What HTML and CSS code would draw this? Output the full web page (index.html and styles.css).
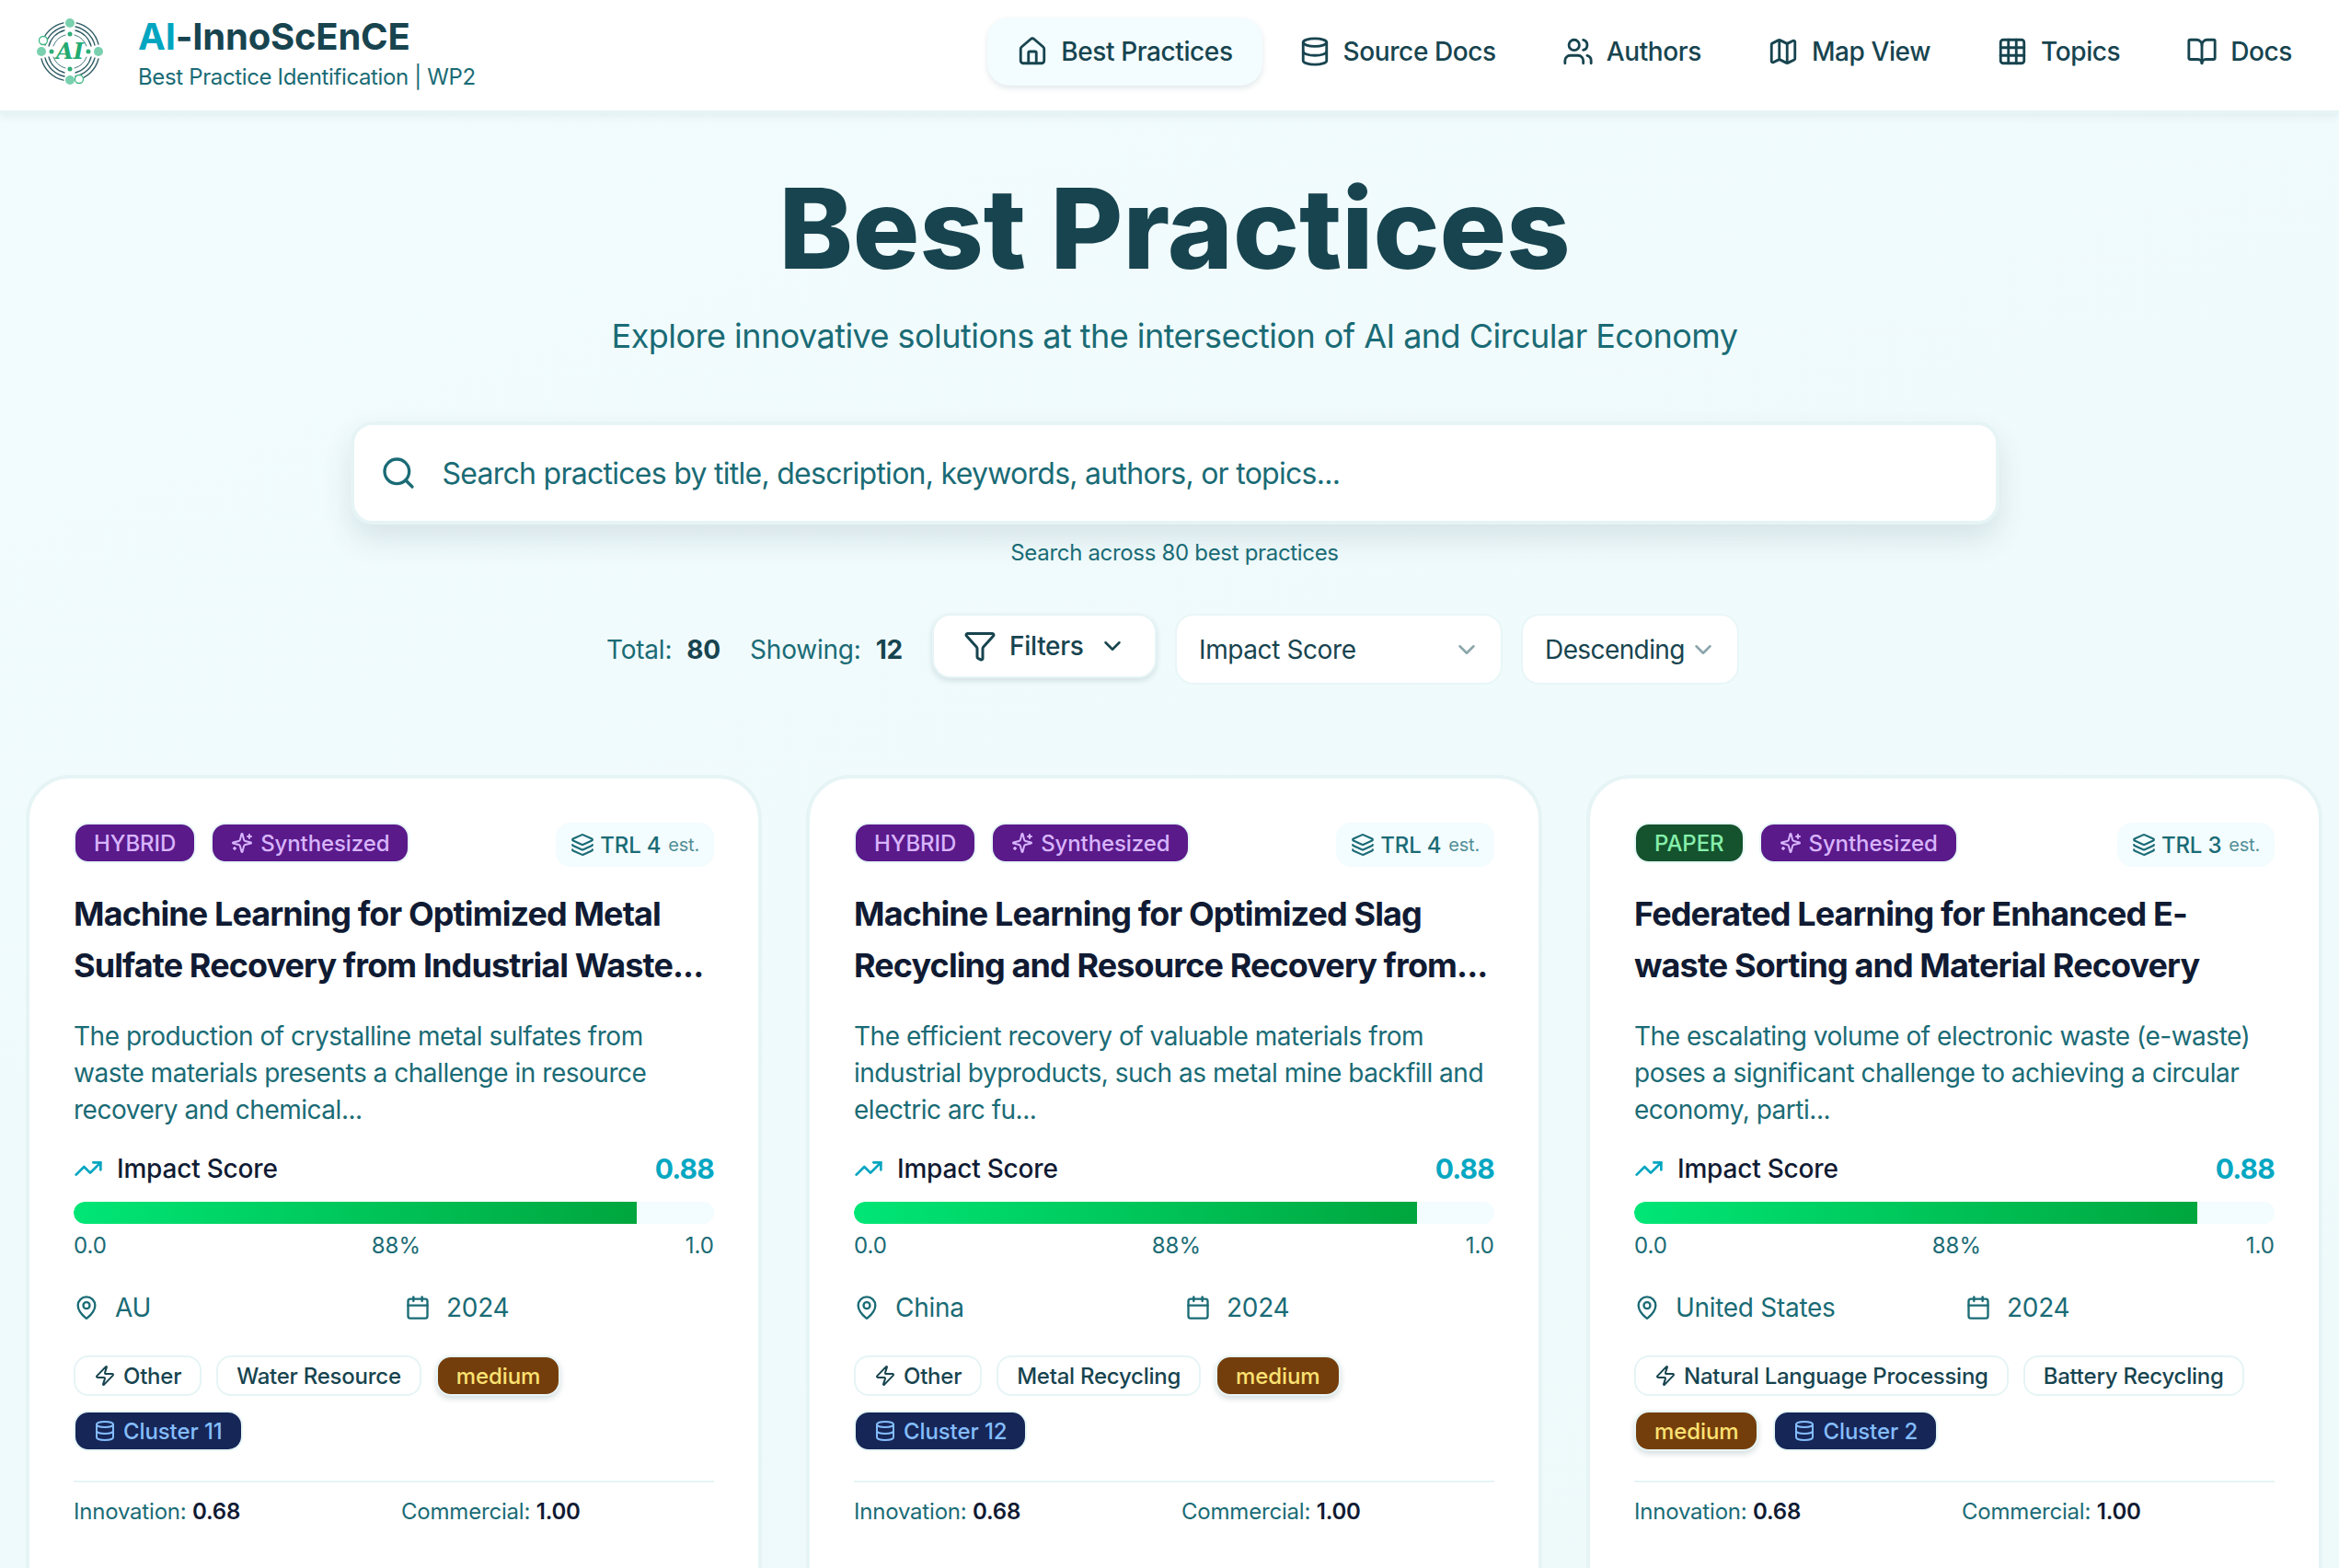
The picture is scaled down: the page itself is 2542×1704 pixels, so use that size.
FILE: index.html
```html
<!DOCTYPE html>
<html lang="en">
<head>
<meta charset="utf-8">
<title>AI-InnoScEnCE Best Practices</title>
<link rel="stylesheet" href="styles.css">
</head>
<body>
<svg class="defs" width="0" height="0" aria-hidden="true">
  <defs>
    <symbol id="i-home" viewBox="0 0 24 24"><path d="M15 21v-8a1 1 0 0 0-1-1h-4a1 1 0 0 0-1 1v8"/><path d="M3 10a2 2 0 0 1 .709-1.528l7-5.999a2 2 0 0 1 2.582 0l7 5.999A2 2 0 0 1 21 10v9a2 2 0 0 1-2 2H5a2 2 0 0 1-2-2z"/></symbol>
    <symbol id="i-db" viewBox="0 0 24 24"><ellipse cx="12" cy="5" rx="9" ry="3"/><path d="M3 5v14a9 3 0 0 0 18 0V5"/><path d="M3 12a9 3 0 0 0 18 0"/></symbol>
    <symbol id="i-users" viewBox="0 0 24 24"><path d="M16 21v-2a4 4 0 0 0-4-4H6a4 4 0 0 0-4 4v2"/><circle cx="9" cy="7" r="4"/><path d="M22 21v-2a4 4 0 0 0-3-3.87"/><path d="M16 3.13a4 4 0 0 1 0 7.75"/></symbol>
    <symbol id="i-map" viewBox="0 0 24 24"><path d="M14.106 5.553a2 2 0 0 0 1.788 0l3.659-1.83A1 1 0 0 1 21 4.619v12.764a1 1 0 0 1-.553.894l-4.553 2.277a2 2 0 0 1-1.788 0l-4.212-2.106a2 2 0 0 0-1.788 0l-3.659 1.83A1 1 0 0 1 3 19.381V6.618a1 1 0 0 1 .553-.894l4.553-2.277a2 2 0 0 1 1.788 0z"/><path d="M15 5.764v15"/><path d="M9 3.236v15"/></symbol>
    <symbol id="i-grid" viewBox="0 0 24 24"><rect x="3" y="3" width="18" height="18" rx="2"/><path d="M3 9h18"/><path d="M3 15h18"/><path d="M9 3v18"/><path d="M15 3v18"/></symbol>
    <symbol id="i-book" viewBox="0 0 24 24"><path d="M12 7v14"/><path d="M3 18a1 1 0 0 1-1-1V4a1 1 0 0 1 1-1h5a4 4 0 0 1 4 4 4 4 0 0 1 4-4h5a1 1 0 0 1 1 1v13a1 1 0 0 1-1 1h-6a3 3 0 0 0-3 3 3 3 0 0 0-3-3z"/></symbol>
    <symbol id="i-search" viewBox="0 0 24 24"><path d="m21 21-4.34-4.34"/><circle cx="11" cy="11" r="8"/></symbol>
    <symbol id="i-filter" viewBox="0 0 24 24"><path d="M10 20a1 1 0 0 0 .553.895l2 1A1 1 0 0 0 14 21v-7a2 2 0 0 1 .517-1.341L21.74 4.67A1 1 0 0 0 21 3H3a1 1 0 0 0-.742 1.67l7.225 7.989A2 2 0 0 1 10 14z"/></symbol>
    <symbol id="i-chev" viewBox="0 0 24 24"><path d="m6 9 6 6 6-6"/></symbol>
    <symbol id="i-spark" viewBox="0 0 24 24"><path d="M9.937 15.5A2 2 0 0 0 8.5 14.063l-6.135-1.582a.5.5 0 0 1 0-.962L8.5 9.936A2 2 0 0 0 9.937 8.5l1.582-6.135a.5.5 0 0 1 .963 0L14.063 8.5A2 2 0 0 0 15.5 9.937l6.135 1.581a.5.5 0 0 1 0 .964L15.5 14.063a2 2 0 0 0-1.437 1.437l-1.582 6.135a.5.5 0 0 1-.963 0z"/><path d="M20 3v4"/><path d="M22 5h-4"/><path d="M4 17v2"/><path d="M5 18H3"/></symbol>
    <symbol id="i-layers" viewBox="0 0 24 24"><path d="M12.83 2.18a2 2 0 0 0-1.66 0L2.6 6.08a1 1 0 0 0 0 1.83l8.58 3.91a2 2 0 0 0 1.66 0l8.58-3.9a1 1 0 0 0 0-1.83z"/><path d="M2 12a1 1 0 0 0 .58.91l8.6 3.91a2 2 0 0 0 1.65 0l8.58-3.9A1 1 0 0 0 22 12"/><path d="M2 17a1 1 0 0 0 .58.91l8.6 3.91a2 2 0 0 0 1.65 0l8.58-3.9A1 1 0 0 0 22 17"/></symbol>
    <symbol id="i-trend" viewBox="0 0 24 24"><path d="M16 7h6v6"/><path d="m22 7-8.5 8.5-5-5L2 17"/></symbol>
    <symbol id="i-pin" viewBox="0 0 24 24"><path d="M20 10c0 4.993-5.539 10.193-7.399 11.799a1 1 0 0 1-1.202 0C9.539 20.193 4 14.993 4 10a8 8 0 0 1 16 0"/><circle cx="12" cy="10" r="3"/></symbol>
    <symbol id="i-cal" viewBox="0 0 24 24"><path d="M8 2v4"/><path d="M16 2v4"/><rect x="3" y="4" width="18" height="18" rx="2"/><path d="M3 10h18"/></symbol>
    <symbol id="i-bolt" viewBox="0 0 24 24"><path d="M4 14a1 1 0 0 1-.78-1.63l9.9-10.2a.5.5 0 0 1 .86.46l-1.92 6.02A1 1 0 0 0 13 10h7a1 1 0 0 1 .78 1.63l-9.9 10.2a.5.5 0 0 1-.86-.46l1.92-6.02A1 1 0 0 0 11 14z"/></symbol>
  </defs>
</svg>

<div class="page">
  <header class="topbar">
    <div class="brand">
      <svg class="logo" viewBox="0 0 72 72" aria-hidden="true">
        <g class="logo-arcs">
          <path d="M5 28A32 32 0 0 1 29 4.8"/><path d="M43 4.800A32 32 0 0 1 67 28"/><path d="M67 44A32 32 0 0 1 43 67.200"/><path d="M29 67.200A32 32 0 0 1 5 44"/>
          <path d="M9 29A28 28 0 0 1 30 9"/><path d="M42 9A28 28 0 0 1 63 29"/><path d="M63 43A28 28 0 0 1 42 63"/><path d="M30 63A28 28 0 0 1 9 43"/>
          <path d="M13 30A24 24 0 0 1 30 13"/><path d="M42 13A24 24 0 0 1 59 30"/><path d="M59 42A24 24 0 0 1 42 59"/><path d="M30 59A24 24 0 0 1 13 42"/>
          <path class="logo-thin" d="M18 30A19 19 0 0 1 31 18"/><path class="logo-thin" d="M41 18A19 19 0 0 1 54 30"/><path class="logo-thin" d="M54 42A19 19 0 0 1 41 54"/><path class="logo-thin" d="M31 54A19 19 0 0 1 18 42"/>
        </g>
        <g class="logo-pale"><circle cx="36" cy="5" r="5"/><circle cx="36" cy="67" r="5"/><circle cx="5" cy="36" r="5"/><circle cx="67" cy="36" r="5"/></g>
        <g class="logo-green"><circle cx="36" cy="17" r="2.500"/><circle cx="36" cy="55" r="2.500"/><circle cx="16" cy="36" r="2.500"/><circle cx="56" cy="36" r="2.500"/></g>
        <g class="logo-ring"><circle cx="7" cy="24" r="4.500"/><circle cx="46" cy="66" r="4.500"/></g>
        <text class="logo-text" x="36" y="44">AI</text>
      </svg>
      <div class="brand-text">
        <div class="brand-name"><span class="brand-ai">AI</span>-InnoScEnCE</div>
        <div class="brand-sub">Best Practice Identification | WP2</div>
      </div>
    </div>
    <nav class="nav">
      <a class="nav-item active"><svg class="ico nav-ico"><use href="#i-home"/></svg>Best Practices</a>
      <a class="nav-item"><svg class="ico nav-ico"><use href="#i-db"/></svg>Source Docs</a>
      <a class="nav-item"><svg class="ico nav-ico"><use href="#i-users"/></svg>Authors</a>
      <a class="nav-item"><svg class="ico nav-ico"><use href="#i-map"/></svg>Map View</a>
      <a class="nav-item"><svg class="ico nav-ico"><use href="#i-grid"/></svg>Topics</a>
      <a class="nav-item"><svg class="ico nav-ico"><use href="#i-book"/></svg>Docs</a>
    </nav>
  </header>

  <main class="main">
    <section class="hero">
      <h1 class="hero-title">Best Practices</h1>
      <p class="hero-sub">Explore innovative solutions at the intersection of AI and Circular Economy</p>
      <div class="search"><svg class="ico search-ico"><use href="#i-search"/></svg><span class="search-text">Search practices by title, description, keywords, authors, or topics...</span></div>
      <p class="search-note">Search across 80 best practices</p>
      <div class="controls">
        <div class="stats">
          <span class="stat"><span>Total:</span><b>80</b></span>
          <span class="stat"><span>Showing:</span><b>12</b></span>
        </div>
        <button class="filter-btn"><svg class="ico filter-ico"><use href="#i-filter"/></svg>Filters<svg class="ico filter-chev"><use href="#i-chev"/></svg></button>
        <div class="select select-impact"><span>Impact Score</span><svg class="ico sel-chev"><use href="#i-chev"/></svg></div>
        <div class="select select-order"><span>Descending</span><svg class="ico sel-chev"><use href="#i-chev"/></svg></div>
      </div>
    </section>

    <section class="cards">
      <article class="card">
        <div class="card-top">
          <div class="badges"><span class="badge purple">HYBRID</span><span class="badge purple"><svg class="ico badge-ico"><use href="#i-spark"/></svg>Synthesized</span></div>
          <div class="trl"><svg class="ico trl-ico"><use href="#i-layers"/></svg><span>TRL 4</span><small>est.</small></div>
        </div>
        <h2 class="card-title"><span>Machine Learning for Optimized Metal</span><span>Sulfate Recovery from Industrial Waste...</span></h2>
        <p class="card-desc"><span>The production of crystalline metal sulfates from</span><span>waste materials presents a challenge in resource</span><span>recovery and chemical...</span></p>
        <div class="score-head"><svg class="ico score-ico"><use href="#i-trend"/></svg><span class="score-label">Impact Score</span><b class="score-val">0.88</b></div>
        <div class="bar"><div class="bar-fill" style="width:88%"></div></div>
        <div class="scale"><span>0.0</span><span>88%</span><span>1.0</span></div>
        <div class="meta"><span class="meta-item"><svg class="ico meta-ico"><use href="#i-pin"/></svg>AU</span><span class="meta-item"><svg class="ico meta-ico"><use href="#i-cal"/></svg>2024</span></div>
        <div class="tags">
          <span class="tag"><svg class="ico tag-ico"><use href="#i-bolt"/></svg>Other</span>
          <span class="tag">Water Resource</span>
          <span class="badge amber">medium</span>
          <span class="badge navy"><svg class="ico badge-ico"><use href="#i-db"/></svg>Cluster 11</span>
        </div>
        <div class="foot"><span><span class="foot-label">Innovation:</span> <b>0.68</b></span><span><span class="foot-label">Commercial:</span> <b>1.00</b></span></div>
      </article>

      <article class="card">
        <div class="card-top">
          <div class="badges"><span class="badge purple">HYBRID</span><span class="badge purple"><svg class="ico badge-ico"><use href="#i-spark"/></svg>Synthesized</span></div>
          <div class="trl"><svg class="ico trl-ico"><use href="#i-layers"/></svg><span>TRL 4</span><small>est.</small></div>
        </div>
        <h2 class="card-title"><span>Machine Learning for Optimized Slag</span><span>Recycling and Resource Recovery from...</span></h2>
        <p class="card-desc"><span>The efficient recovery of valuable materials from</span><span>industrial byproducts, such as metal mine backfill and</span><span>electric arc fu...</span></p>
        <div class="score-head"><svg class="ico score-ico"><use href="#i-trend"/></svg><span class="score-label">Impact Score</span><b class="score-val">0.88</b></div>
        <div class="bar"><div class="bar-fill" style="width:88%"></div></div>
        <div class="scale"><span>0.0</span><span>88%</span><span>1.0</span></div>
        <div class="meta"><span class="meta-item"><svg class="ico meta-ico"><use href="#i-pin"/></svg>China</span><span class="meta-item"><svg class="ico meta-ico"><use href="#i-cal"/></svg>2024</span></div>
        <div class="tags">
          <span class="tag"><svg class="ico tag-ico"><use href="#i-bolt"/></svg>Other</span>
          <span class="tag">Metal Recycling</span>
          <span class="badge amber">medium</span>
          <span class="badge navy"><svg class="ico badge-ico"><use href="#i-db"/></svg>Cluster 12</span>
        </div>
        <div class="foot"><span><span class="foot-label">Innovation:</span> <b>0.68</b></span><span><span class="foot-label">Commercial:</span> <b>1.00</b></span></div>
      </article>

      <article class="card">
        <div class="card-top">
          <div class="badges"><span class="badge green">PAPER</span><span class="badge purple"><svg class="ico badge-ico"><use href="#i-spark"/></svg>Synthesized</span></div>
          <div class="trl"><svg class="ico trl-ico"><use href="#i-layers"/></svg><span>TRL 3</span><small>est.</small></div>
        </div>
        <h2 class="card-title"><span>Federated Learning for Enhanced E-</span><span>waste Sorting and Material Recovery</span></h2>
        <p class="card-desc"><span>The escalating volume of electronic waste (e-waste)</span><span>poses a significant challenge to achieving a circular</span><span>economy, parti...</span></p>
        <div class="score-head"><svg class="ico score-ico"><use href="#i-trend"/></svg><span class="score-label">Impact Score</span><b class="score-val">0.88</b></div>
        <div class="bar"><div class="bar-fill" style="width:88%"></div></div>
        <div class="scale"><span>0.0</span><span>88%</span><span>1.0</span></div>
        <div class="meta"><span class="meta-item"><svg class="ico meta-ico"><use href="#i-pin"/></svg>United States</span><span class="meta-item"><svg class="ico meta-ico"><use href="#i-cal"/></svg>2024</span></div>
        <div class="tags">
          <span class="tag"><svg class="ico tag-ico"><use href="#i-bolt"/></svg>Natural Language Processing</span>
          <span class="tag">Battery Recycling</span>
          <span class="badge amber">medium</span>
          <span class="badge navy"><svg class="ico badge-ico"><use href="#i-db"/></svg>Cluster 2</span>
        </div>
        <div class="foot"><span><span class="foot-label">Innovation:</span> <b>0.68</b></span><span><span class="foot-label">Commercial:</span> <b>1.00</b></span></div>
      </article>
    </section>
  </main>
</div>
</body>
</html>
```
FILE: styles.css
```css
* { box-sizing: border-box; }
html, body { margin: 0; padding: 0; height: 100%; overflow: hidden; }
body {
  font-family: Inter, "Liberation Sans", sans-serif;
  color: #17444f;
  background: #f0fafb;
}
.defs { position: absolute; }
.page {
  height: 1704px;
  overflow: hidden;
  background: linear-gradient(160deg, #f2fcfe 0%, #eef9fa 100%);
}
.ico {
  fill: none;
  stroke: currentColor;
  stroke-width: 2;
  stroke-linecap: round;
  stroke-linejoin: round;
  flex: none;
}

/* header */
.topbar {
  height: 124px;
  display: flex;
  align-items: center;
  justify-content: space-between;
  padding: 0 19px 8px 40px;
  background: #fff;
  border-bottom: 4px solid #e6f4f5;
  box-shadow: 0 4px 8px rgba(23, 68, 79, .06);
}
.brand { display: flex; align-items: center; gap: 38px; }
.logo { width: 72px; height: 72px; }
.logo-arcs { fill: none; stroke: #2b5a63; stroke-width: 1.3; stroke-linecap: round; }
.logo-thin { stroke-width: 1; stroke: #4a7a82; }
.logo-pale circle { fill: #79d0ae; }
.logo-green circle { fill: #2fae78; }
.logo-ring circle { fill: #fff; stroke: #3fb783; stroke-width: 1.3; }
.logo-text {
  font-family: "DejaVu Serif", serif;
  font-size: 24px;
  font-weight: 700;
  font-style: italic;
  fill: #22aa70;
  text-anchor: middle;
}
.brand-text { display: flex; flex-direction: column; gap: 4px; padding-top: 4px; }
.brand-name { font-size: 40px; line-height: 48px; font-weight: 700; letter-spacing: -.2px; color: #17444f; }
.brand-ai { color: #00a5c0; }
.brand-sub { font-size: 24px; line-height: 32px; letter-spacing: -.36px; color: #1a6b75; }
.nav { display: flex; gap: 8px; }
.nav-item {
  display: flex;
  align-items: center;
  gap: 14px;
  height: 74px;
  padding: 0 32px;
  border-radius: 24px;
  font-size: 28px;
  font-weight: 500;
  letter-spacing: -.4px;
  color: #17444f;
}
.nav-item.active { background: #f3fcfe; box-shadow: 0 3px 6px rgba(23, 68, 79, .12); }
.nav-ico { width: 34px; height: 34px; }

/* hero */
.main { padding: 0 17px 0 28px; }
.hero { display: flex; flex-direction: column; align-items: center; }
.hero-title {
  margin: 52px 0 0;
  font-size: 121px;
  line-height: 144px;
  font-weight: 800;
  color: #17444f;
}
.hero-sub { margin: 17px 0 0; font-size: 36px; line-height: 56px; letter-spacing: -.54px; color: #1a6b75; }
.search {
  margin-top: 65px;
  width: 1792px;
  height: 112px;
  display: flex;
  align-items: center;
  gap: 28px;
  padding: 0 28px;
  background: #fff;
  border: 4px solid #e6f4f5;
  border-radius: 24px;
  box-shadow: 0 16px 32px rgba(23, 68, 79, .12);
}
.search-ico { width: 40px; height: 40px; color: #1a6b75; }
.search-text { font-size: 32px; letter-spacing: -.73px; color: #1a6b75; }
.search-note { margin: 15px 0 0; font-size: 24px; line-height: 32px; letter-spacing: -.32px; color: #1a6b75; }
.controls { margin: 50px 4px 0 0; display: flex; align-items: center; gap: 20px; }
.stats { display: flex; gap: 32px; margin-right: 12px; }
.stat { display: flex; gap: 16px; align-items: baseline; font-size: 28px; letter-spacing: -.2px; color: #1a6b75; }
.stat b { color: #17444f; font-weight: 700; }
.filter-btn {
  align-self: flex-start;
  display: flex;
  align-items: center;
  height: 70px;
  width: 244px;
  padding: 0 0 0 32px;
  background: #fff;
  border: 2px solid #e6f4f5;
  border-radius: 20px;
  box-shadow: 0 3px 6px rgba(23, 68, 79, .14);
  font: 500 28px Inter, sans-serif;
  letter-spacing: -.3px;
  color: #17444f;
}
.filter-ico { width: 36px; height: 36px; margin-right: 14px; }
.filter-chev { width: 30px; height: 30px; margin-left: 16px; }
.select {
  display: flex;
  align-items: center;
  justify-content: space-between;
  height: 77px;
  background: #fff;
  border: 2px solid #e8f6f7;
  border-radius: 20px;
  font-size: 28px;
  color: #17444f;
}
.select-impact { width: 356px; padding: 0 22px 0 24px; letter-spacing: -.4px; }
.select-order { width: 237px; padding: 0 22px 0 24px; letter-spacing: -.6px; }
.sel-chev { width: 30px; height: 30px; color: #8aa6ab; }

/* cards */
.cards {
  margin-top: 98px;
  display: grid;
  grid-template-columns: repeat(3, 800px);
  column-gap: 48px;
}
.card {
  height: 1000px;
  padding: 48px;
  background: #fff;
  border: 4px solid #e6f4f5;
  border-radius: 48px;
}
.card-top { display: flex; justify-content: space-between; align-items: flex-start; }
.badges { display: flex; gap: 16px; }
.badge {
  display: inline-flex;
  align-items: center;
  gap: 8px;
  height: 44px;
  padding: 0 20px;
  border: 2px solid #e8f6f7;
  border-radius: 16px;
  font-size: 24px;
  font-weight: 500;
  letter-spacing: -.1px;
}
.badge.purple { background: #5a1a8a; color: #d8b4fe; }
.badge.green { background: #14532d; color: #86efac; }
.badge.amber { background: #743e0c; color: #fde272; box-shadow: 0 3px 6px rgba(23, 68, 79, .18); }
.badge.navy { background: #162657; color: #84bdfc; }
.badge-ico { width: 24px; height: 24px; }
.trl {
  display: flex;
  align-items: center;
  height: 48px;
  padding: 0 16px;
  background: #f3fcfe;
  border-radius: 16px;
  font-size: 24px;
  font-weight: 500;
  letter-spacing: -.2px;
  color: #1a6b75;
}
.trl-ico { width: 26px; height: 26px; margin-right: 6px; }
.trl small { margin-left: 8px; font-size: 20px; font-weight: 400; opacity: .75; }
.card-title {
  margin: 23px 0 0;
  font-size: 36px;
  line-height: 56px;
  font-weight: 700;
  letter-spacing: -.9px;
  color: #101b33;
}
.card-title span, .card-desc span { display: block; white-space: nowrap; }
.card-desc {
  margin: 29px 0 0;
  font-size: 28px;
  line-height: 40px;
  letter-spacing: -.48px;
  color: #1a6b75;
}
.score-head { margin-top: 24px; display: flex; align-items: center; gap: 15px; height: 40px; }
.score-ico { width: 32px; height: 32px; color: #00a5c0; }
.score-label { font-size: 28px; font-weight: 500; letter-spacing: -.2px; color: #101b33; }
.score-val { margin-left: auto; font-size: 30px; font-weight: 700; letter-spacing: -.8px; color: #07a7c2; }
.bar { margin-top: 16px; height: 24px; border-radius: 12px; background: #f3fcfe; overflow: hidden; }
.bar-fill { height: 100%; background: linear-gradient(90deg, #00e676, #00a63e); border-radius: 12px 0 0 12px; }
.scale {
  margin-top: 8px;
  display: flex;
  justify-content: space-between;
  font-size: 24px;
  line-height: 32px;
  color: #1a6b75;
}
.meta { margin-top: 30.500px; display: grid; grid-template-columns: 1fr 1fr; column-gap: 24px; }
.meta-item { display: flex; align-items: center; gap: 17px; font-size: 28px; line-height: 40px; letter-spacing: -.3px; color: #1a6b75; }
.meta-ico { width: 28px; height: 28px; }
.tags { margin-top: 32.500px; display: flex; flex-wrap: wrap; align-items: center; gap: 16px; }
.tag {
  display: inline-flex;
  align-items: center;
  gap: 8px;
  height: 44px;
  padding: 0 20px;
  background: #fff;
  border: 2px solid #e6f4f5;
  border-radius: 16px;
  font-size: 24px;
  font-weight: 500;
  letter-spacing: -.25px;
  color: #17444f;
}
.tag-ico { width: 24px; height: 24px; }
.foot {
  margin-top: 32px;
  padding-top: 16px;
  border-top: 2px solid #e6f4f5;
  display: grid;
  grid-template-columns: 1fr 1fr;
  column-gap: 16px;
  font-size: 24px;
  line-height: 32px;
  letter-spacing: -.2px;
}
.foot-label { color: #1a6b75; }
.foot b { color: #101b33; font-weight: 600; }
```
